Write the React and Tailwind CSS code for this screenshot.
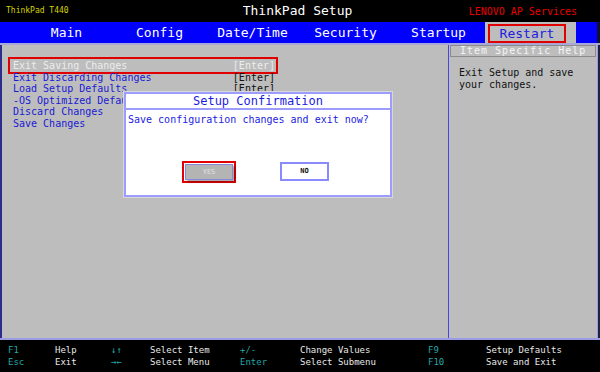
import React from "react";

const mono = "font-['DejaVu_Sans_Mono','Liberation_Mono',monospace]";

function Tab({ children }) {
  return (
    <div className="w-[93px] text-center text-[13px] leading-[21px] text-white">{children}</div>
  );
}

function Row({ label, color, enter, enterColor, children }) {
  return (
    <div className="relative ml-[11px] w-[262px] flex justify-between h-[11.5px] leading-[11.5px] text-[10px]">
      {children}
      <span className={color}>{label}</span>
      {enter && <span className={enterColor}>[Enter]</span>}
    </div>
  );
}

export default function App() {
  return (
    <div className={`w-[600px] h-[372px] bg-black flex flex-col overflow-hidden ${mono}`}>
      {/* top bar */}
      <div className="h-[22px] flex items-center">
        <div className="flex-1 pl-[6px] text-[8px] text-[#d4d400]">ThinkPad T440</div>
        <div className="ml-[12px] text-[13px] text-white leading-[22px]">ThinkPad Setup</div>
        <div className="flex-1 flex justify-end pr-[23px] text-[10px] text-[#e80000]">LENOVO AP Services</div>
      </div>
      {/* menu bar */}
      <div className="h-[21px] bg-[#0000fc] flex pl-[20px]">
        <Tab>Main</Tab>
        <Tab>Config</Tab>
        <Tab>Date/Time</Tab>
        <Tab>Security</Tab>
        <Tab>Startup</Tab>
        <div className="w-[91px] bg-[#bdbdbd] pt-[2px] pl-[3px]">
          <div className="w-[78px] h-[19px] border-2 border-[#e00000] text-[13px] leading-[15px] text-center text-[#1c1ce0]">
            Restart
          </div>
        </div>
        <div className="flex-1" />
        <div className="w-[3px] bg-[#101030]" />
      </div>
      <div className="h-[2px] bg-[#a8a8d8]" />
      {/* content */}
      <div className="relative flex-1 flex bg-[#bdbdbd] border-l-2 border-[#2c2c8c]">
        <div className="w-[446px] pt-[15px]">
          <Row label="Exit Saving Changes" color="text-[#ececec]" enter enterColor="text-[#ececec]">
            <div className="absolute left-[-5px] top-[-3px] w-[270px] h-[17px] border-2 border-[#e00000]" />
          </Row>
          <Row label="Exit Discarding Changes" color="text-[#1a1ad4]" enter enterColor="text-[#111]" />
          <Row label="Load Setup Defaults" color="text-[#1a1ad4]" enter enterColor="text-[#111]" />
          <Row label="-OS Optimized Defaults" color="text-[#1a1ad4]" />
          <Row label="Discard Changes" color="text-[#1a1ad4]" />
          <Row label="Save Changes" color="text-[#1a1ad4]" />
        </div>
        <div className="w-[1px] bg-[#4646e6]" />
        <div className="w-[148px] flex flex-col">
          <div className="mx-[1px] h-[12px] border border-[#8c8c8c] bg-[#bdbdbd] pl-[9px] text-[10px] leading-[10px] tracking-[1px] text-[#f4f4f4]">
            Item Specific Help
          </div>
          <div className="pl-[10px] pt-[10px] text-[10px] leading-[11.5px] text-[#111]">
            <div>Exit Setup and save</div>
            <div>your changes.</div>
          </div>
        </div>
        <div className="w-[1px] bg-[#9a9ae6]" />
        <div className="w-[2px] bg-[#202040]" />

        {/* dialog */}
        <div className="absolute left-[122px] top-[47px] w-[268px] h-[105px] bg-white border-2 border-[#9c9cff] outline outline-1 outline-[#d8d8d8] flex flex-col">
          <div className="h-[16px] border-b-2 border-[#9c9cff] text-center text-[12px] leading-[14px] text-[#1c1ce0]">
            Setup Confirmation
          </div>
          <div className="pl-[2px] pt-[4px] text-[10px] leading-[12px] text-[#1c1ce0]">
            Save configuration changes and exit now?
          </div>
          <div className="flex pl-[56px] mt-[35px] items-start">
            <div className="w-[54px] h-[22px] border-2 border-[#e40000] p-[1px]">
              <div className="w-full h-full bg-[#b4b4b4] border border-[#8888dd] shadow-[2px_2px_2px_rgba(0,0,0,0.35)] flex items-center justify-center text-[7px] text-[#e2e2e2]">
                YES
              </div>
            </div>
            <div className="ml-[44px] mt-[1px] w-[49px] h-[19px] bg-white border-2 border-[#8a8aff] flex items-center justify-center text-[7px] font-bold text-[#111]">
              NO
            </div>
          </div>
        </div>
      </div>
      <div className="h-[2px] bg-[#9c9ce6]" />
      {/* footer */}
      <div className="h-[32px] pt-[5px] pl-[8px] text-[9px] leading-[11.5px]">
        <div className="grid grid-cols-[47px_56px_39px_90px_60px_128px_58px_1fr]">
          <span className="text-[#22a6a6]">F1</span>
          <span className="text-[#e8e8e8]">Help</span>
          <span className="text-[#22a6a6]">↓↑</span>
          <span className="text-[#e8e8e8]">Select Item</span>
          <span className="text-[#22a6a6]">+/-</span>
          <span className="text-[#e8e8e8]">Change Values</span>
          <span className="text-[#22a6a6]">F9</span>
          <span className="text-[#e8e8e8]">Setup Defaults</span>
          <span className="text-[#22a6a6]">Esc</span>
          <span className="text-[#e8e8e8]">Exit</span>
          <span className="text-[#22a6a6]">→←</span>
          <span className="text-[#e8e8e8]">Select Menu</span>
          <span className="text-[#22a6a6]">Enter</span>
          <span className="text-[#e8e8e8]">Select Submenu</span>
          <span className="text-[#22a6a6]">F10</span>
          <span className="text-[#e8e8e8]">Save and Exit</span>
        </div>
      </div>
    </div>
  );
}
